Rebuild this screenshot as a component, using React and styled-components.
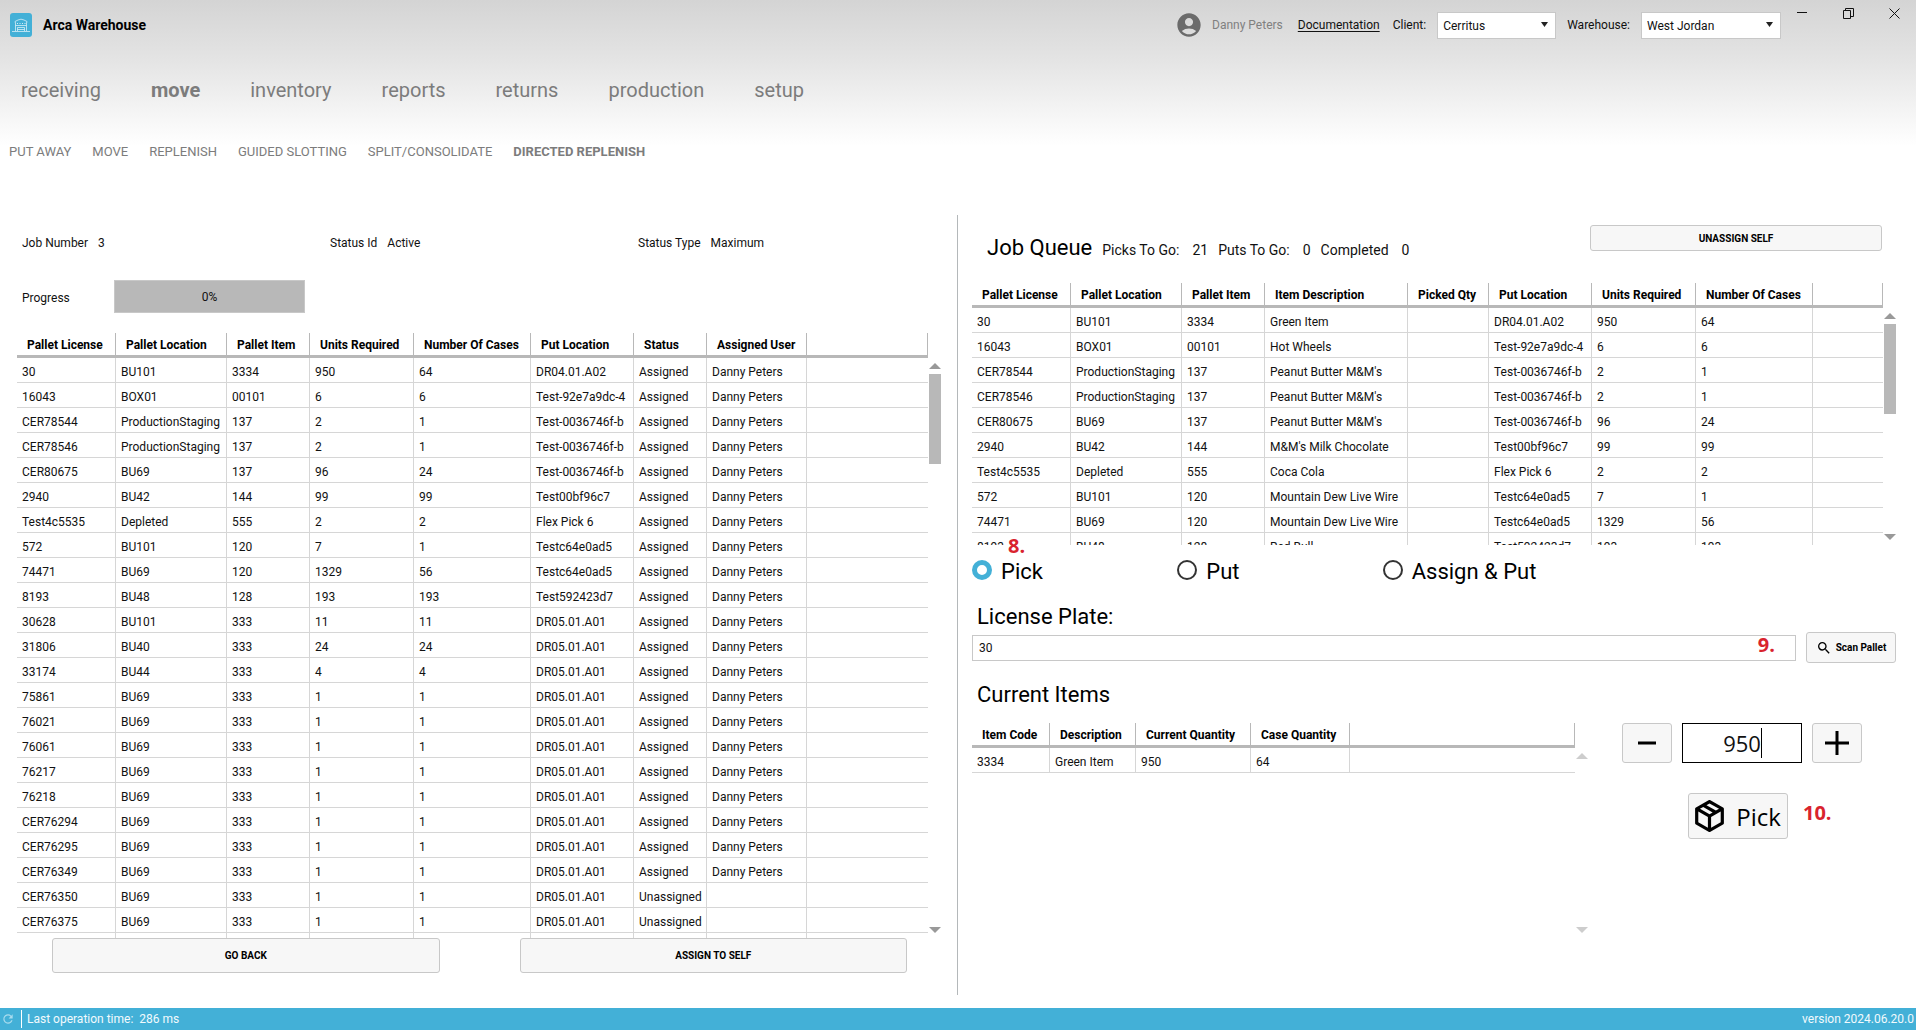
import { useState } from 'react';
import styled, { createGlobalStyle } from 'styled-components';
import { MdAccountCircle, MdSearch, MdRefresh } from 'react-icons/md';

const GlobalStyle = createGlobalStyle`
  * {
    box-sizing: border-box;
  }
  body {
    margin: 0;
    background: #fff;
    color: #111;
    font-family: Roboto, "Liberation Sans", sans-serif;
    font-size: 12px;
    line-height: 20px;
  }
  button, input, select {
    font-family: inherit;
    color: inherit;
  }
`;

const Page = styled.div`
  height: 100vh;
  display: flex;
  flex-direction: column;
  background: linear-gradient(#d4d4d4, #e4e4e4 60px, #fff 146px);
`;

/* ---------- header ---------- */

const TopBar = styled.header`
  display: flex;
  align-items: center;
  height: 50px;
  padding: 0 1px 0 10px;
`;

const Logo = styled.svg`
  width: 22px;
  height: 24px;
  margin-right: 11px;
`;

const AppTitle = styled.h1`
  margin: 0;
  font-size: 14px;
  font-weight: 700;
  color: #000;
`;

const UserArea = styled.div`
  display: flex;
  align-items: center;
  gap: 11px;
  margin-left: auto;
`;

const Avatar = styled(MdAccountCircle)`
  width: 28px;
  height: 28px;
  margin: 0 -2px;
  color: #6b6b6b;
`;

const UserName = styled.span`
  color: #808080;
`;

const DocLink = styled.a`
  margin: 0 2px 0 4px;
  color: #111;
  text-underline-offset: 2px;
`;

const SelectBox = styled.div`
  position: relative;
  width: ${(p) => p.$width};

  select {
    appearance: none;
    width: 100%;
    height: 27px;
    padding: 1px 20px 0 5px;
    border: 1px solid #c8c8c8;
    border-radius: 0;
    background: #fff;
    font-size: 12px;
  }
  svg {
    position: absolute;
    right: 8px;
    top: 10px;
    pointer-events: none;
  }
`;

const WindowButtons = styled.div`
  display: flex;
  align-self: flex-start;
  gap: 4px;

  button {
    display: flex;
    align-items: center;
    justify-content: center;
    width: 42px;
    height: 26px;
    padding: 0;
    border: 0;
    background: none;
  }
`;

const MainNav = styled.nav`
  display: flex;
  align-items: center;
  gap: 50px;
  height: 80px;
  padding-left: 21px;
`;

const SubNav = styled.nav`
  display: flex;
  align-items: center;
  gap: 21px;
  height: 44px;
  padding-left: 9px;
`;

const NavLink = styled.a`
  font-size: ${(p) => (p.$small ? '13px' : '20px')};
  font-weight: ${(p) => (p.$active ? 700 : 400)};
  color: #7c7c7c;
  text-decoration: none;
`;

/* ---------- panels ---------- */

const Main = styled.main`
  flex: 1;
  min-height: 0;
  display: grid;
  grid-template-columns: 1fr 1fr;
  padding: 41px 0 13px;
`;

const LeftPanel = styled.section`
  display: flex;
  flex-direction: column;
  min-width: 0;
  min-height: 0;
  padding: 18px 16px 22px 17px;
  border-right: 1px solid #b4b8ba;
`;

const RightPanel = styled.section`
  display: flex;
  flex-direction: column;
  min-width: 0;
  min-height: 0;
  padding: 0 20px 57px 14px;
`;

const InfoRow = styled.div`
  display: grid;
  grid-template-columns: repeat(3, 1fr);
`;

const InfoItem = styled.div`
  display: flex;
  gap: 10px;
  padding-left: 5px;
`;

const ProgressRow = styled.div`
  display: flex;
  align-items: center;
  margin: 27px 0 20px;
  padding-left: 5px;
`;

const ProgressLabel = styled.span`
  width: 92px;
  padding-top: 2px;
`;

const ProgressBar = styled.div`
  width: 191px;
  height: 33px;
  padding-top: 1px;
  border: 1px solid #c8c8c8;
  background: #b8b8b8;
  line-height: 31px;
  text-align: center;
`;

const FooterButtons = styled.div`
  display: grid;
  grid-template-columns: 1fr 1fr;
  gap: 80px;
  padding: 0 34px 0 35px;
`;

const Button = styled.button`
  height: ${(p) => p.$height || '35px'};
  padding: 0;
  border: 1px solid #c8c8c8;
  border-radius: 3px;
  background: #f7f7f7;
  color: #000;
  font-size: 10px;
  font-weight: 700;
`;

/* ---------- grid ---------- */

const TableArea = styled.div`
  display: flex;
  min-height: 0;
  overflow: hidden;
  ${(p) => (p.$height ? `flex: none; height: ${p.$height};` : 'flex: 1;')}
`;

const TableClip = styled.div`
  flex: 1;
  min-width: 0;
  overflow: hidden;
`;

const Table = styled.table`
  width: 100%;
  table-layout: fixed;
  border-spacing: 0;
`;

const Th = styled.th`
  width: ${(p) => p.$width || 'auto'};
  height: 25px;
  padding: 2px 0 0 10px;
  border-right: 1px solid #b8b8b8;
  border-bottom: 3px solid #b8b8b8;
  color: #000;
  font-weight: 700;
  line-height: 16px;
  text-align: left;
  white-space: nowrap;
`;

const Td = styled.td`
  height: 25px;
  padding: 4px 0 0 5px;
  border-right: 1px solid #d6d6d6;
  border-bottom: 1px solid #d6d6d6;
  line-height: 16px;
  white-space: nowrap;

  &:last-child {
    border-right: 0;
  }
`;

const ScrollTrack = styled.div`
  display: flex;
  flex-direction: column;
  align-items: center;
  width: 13px;
  padding: 30px 0 5px;
  color: ${(p) => (p.$disabled ? '#cdcdcd' : '#999')};
`;

const Thumb = styled.div`
  width: 12px;
  height: 90px;
  margin-top: 5px;
  background: #b8b8b8;
`;

const Spacer = styled.div`
  flex: 1;
`;

/* ---------- job queue ---------- */

const QueueHeader = styled.div`
  display: flex;
  align-items: flex-start;
  justify-content: space-between;
  height: 68px;
  padding: 10px 14px 0 15px;
`;

const QueueStats = styled.div`
  display: flex;
  align-items: baseline;
  gap: 10px;
  padding-top: 8px;
  font-size: 14px;
  line-height: 30px;
  white-space: nowrap;
`;

const Heading = styled.h2`
  margin: 0;
  font-size: 22px;
  font-weight: 400;
  color: #000;
`;

const Stat = styled.span`
  display: inline-flex;
  gap: 13px;
`;

const UnassignButton = styled(Button)`
  width: 292px;
`;

const RadioHolder = styled.div`
  position: relative;
`;

const RadioGroup = styled.div`
  display: grid;
  grid-template-columns: repeat(3, 1fr);
  align-items: center;
  width: 66.67%;
  height: 50px;
`;

const RadioLabel = styled.label`
  display: flex;
  align-items: center;
  gap: 9px;
  color: #000;
  font-size: 22px;
  white-space: nowrap;

  input {
    appearance: none;
    width: 20px;
    height: 20px;
    margin: 0;
    border: 2px solid #333;
    border-radius: 50%;
    background: #fff;
  }
  input:checked {
    border: 5px solid #43b0d7;
  }
  span {
    padding-top: 3px;
  }
`;

const FieldLabel = styled.label`
  margin-top: 7px;
  padding-left: 5px;
  color: #000;
  font-size: 22px;
  line-height: 30px;
`;

const PlateRow = styled.div`
  position: relative;
  display: flex;
  align-items: center;
  gap: 10px;
`;

const PlateInput = styled.input`
  flex: 1;
  height: 26px;
  padding: 1px 6px 0;
  border: 1px solid #c8c8c8;
  font-size: 12px;
`;

const ScanButton = styled(Button)`
  display: flex;
  align-items: center;
  justify-content: center;
  gap: 4px;
  width: 90px;
  white-space: nowrap;
`;

const ItemsHeading = styled(Heading)`
  margin: 16px 0 12px;
  padding-left: 5px;
  line-height: 32px;
`;

const ItemsRow = styled.div`
  flex: 1;
  min-height: 0;
  display: grid;
  grid-template-columns: 2fr 1fr;
`;

const Actions = styled.div`
  display: flex;
  flex-direction: column;
  align-items: center;
  gap: 30px;
`;

const Stepper = styled.div`
  display: flex;
  gap: 10px;
`;

const StepButton = styled(Button)`
  display: flex;
  align-items: center;
  justify-content: center;
  width: 50px;
`;

const QtyBox = styled.div`
  position: relative;
  width: 120px;

  input {
    width: 100%;
    height: 40px;
    border: 1px solid #000;
    font-family: "Open Sans", sans-serif;
    font-size: 22px;
    text-align: center;
  }
`;

const Caret = styled.span`
  position: absolute;
  top: 5px;
  left: 79px;
  width: 1px;
  height: 30px;
  background: #000;
`;

const PickHolder = styled.div`
  position: relative;
  margin-right: 8px;
`;

const PickButton = styled(Button)`
  display: flex;
  align-items: center;
  justify-content: center;
  gap: 12px;
  width: 100px;
  font-family: "Open Sans", sans-serif;
  font-size: 24px;
  font-weight: 500;
`;

/* red step numbers laid over the screen */
const Step = styled.span`
  position: absolute;
  left: ${(p) => p.$left || 'auto'};
  right: ${(p) => p.$right || 'auto'};
  top: ${(p) => p.$top};
  color: #d9232e;
  font-family: "Open Sans", sans-serif;
  font-size: 20px;
  font-weight: 700;
  line-height: 20px;
`;

const StatusBar = styled.footer`
  display: flex;
  align-items: center;
  height: 22px;
  padding: 0 2px 0 1px;
  background: #43b0d7;
  color: #f2fafd;
`;

const StatusText = styled.span`
  margin-left: 6px;
  padding-left: 5px;
  border-left: 1px solid #fff;
  line-height: 18px;
  white-space: pre;
`;

const Version = styled.span`
  margin-left: auto;
`;

/* ---------- data ---------- */

const mainNav = ['receiving', 'move', 'inventory', 'reports', 'returns', 'production', 'setup'];
const subNav = ['PUT AWAY', 'MOVE', 'REPLENISH', 'GUIDED SLOTTING', 'SPLIT/CONSOLIDATE', 'DIRECTED REPLENISH'];

const jobColumns = [
  ['Pallet License', '99px'],
  ['Pallet Location', '111px'],
  ['Pallet Item', '83px'],
  ['Units Required', '104px'],
  ['Number Of Cases', '117px'],
  ['Put Location', '103px'],
  ['Status', '73px'],
  ['Assigned User', '100px'],
  [''],
];

const DP = 'Danny Peters';
const jobRows = [
  ['30', 'BU101', '3334', '950', '64', 'DR04.01.A02', 'Assigned', DP],
  ['16043', 'BOX01', '00101', '6', '6', 'Test-92e7a9dc-4', 'Assigned', DP],
  ['CER78544', 'ProductionStaging', '137', '2', '1', 'Test-0036746f-b', 'Assigned', DP],
  ['CER78546', 'ProductionStaging', '137', '2', '1', 'Test-0036746f-b', 'Assigned', DP],
  ['CER80675', 'BU69', '137', '96', '24', 'Test-0036746f-b', 'Assigned', DP],
  ['2940', 'BU42', '144', '99', '99', 'Test00bf96c7', 'Assigned', DP],
  ['Test4c5535', 'Depleted', '555', '2', '2', 'Flex Pick 6', 'Assigned', DP],
  ['572', 'BU101', '120', '7', '1', 'Testc64e0ad5', 'Assigned', DP],
  ['74471', 'BU69', '120', '1329', '56', 'Testc64e0ad5', 'Assigned', DP],
  ['8193', 'BU48', '128', '193', '193', 'Test592423d7', 'Assigned', DP],
  ['30628', 'BU101', '333', '11', '11', 'DR05.01.A01', 'Assigned', DP],
  ['31806', 'BU40', '333', '24', '24', 'DR05.01.A01', 'Assigned', DP],
  ['33174', 'BU44', '333', '4', '4', 'DR05.01.A01', 'Assigned', DP],
  ['75861', 'BU69', '333', '1', '1', 'DR05.01.A01', 'Assigned', DP],
  ['76021', 'BU69', '333', '1', '1', 'DR05.01.A01', 'Assigned', DP],
  ['76061', 'BU69', '333', '1', '1', 'DR05.01.A01', 'Assigned', DP],
  ['76217', 'BU69', '333', '1', '1', 'DR05.01.A01', 'Assigned', DP],
  ['76218', 'BU69', '333', '1', '1', 'DR05.01.A01', 'Assigned', DP],
  ['CER76294', 'BU69', '333', '1', '1', 'DR05.01.A01', 'Assigned', DP],
  ['CER76295', 'BU69', '333', '1', '1', 'DR05.01.A01', 'Assigned', DP],
  ['CER76349', 'BU69', '333', '1', '1', 'DR05.01.A01', 'Assigned', DP],
  ['CER76350', 'BU69', '333', '1', '1', 'DR05.01.A01', 'Unassigned', ''],
  ['CER76375', 'BU69', '333', '1', '1', 'DR05.01.A01', 'Unassigned', ''],
  [],
];

const queueColumns = [
  ['Pallet License', '99px'],
  ['Pallet Location', '111px'],
  ['Pallet Item', '83px'],
  ['Item Description', '143px'],
  ['Picked Qty', '81px'],
  ['Put Location', '103px'],
  ['Units Required', '104px'],
  ['Number Of Cases', '117px'],
  [''],
];

const descriptions = [
  'Green Item',
  'Hot Wheels',
  "Peanut Butter M&M's",
  "Peanut Butter M&M's",
  "Peanut Butter M&M's",
  "M&M's Milk Chocolate",
  'Coca Cola',
  'Mountain Dew Live Wire',
  'Mountain Dew Live Wire',
  'Red Bull',
];

const queueRows = descriptions.map((text, i) => {
  const [license, location, item, units, cases, put] = jobRows[i];
  return [license, location, item, text, '', put, units, cases];
});

const itemColumns = [
  ['Item Code', '78px'],
  ['Description', '86px'],
  ['Current Quantity', '115px'],
  ['Case Quantity', '99px'],
  [''],
];

/* ---------- parts ---------- */

const DataGrid = ({ columns, rows, height, disabled }) => (
  <TableArea $height={height}>
    <TableClip>
      <Table>
        <thead>
          <tr>
            {columns.map(([name, width], i) => (
              <Th key={i} $width={width}>{name}</Th>
            ))}
          </tr>
        </thead>
        <tbody>
          {rows.map((row, i) => (
            <tr key={i}>
              {columns.map((col, j) => (
                <Td key={j}>{row[j]}</Td>
              ))}
            </tr>
          ))}
        </tbody>
      </Table>
    </TableClip>
    <ScrollTrack $disabled={disabled}>
      <svg width="12" height="6"><path d="M0 6L6 0l6 6z" fill="currentColor" /></svg>
      {!disabled && <Thumb />}
      <Spacer />
      <svg width="12" height="6"><path d="M0 0l6 6 6-6z" fill="currentColor" /></svg>
    </ScrollTrack>
  </TableArea>
);

const DropDown = ({ id, value, width }) => (
  <SelectBox $width={width}>
    <select id={id} defaultValue={value}>
      <option>{value}</option>
    </select>
    <svg width="7" height="5"><path d="M0 0h7L3.500 5z" fill="#222" /></svg>
  </SelectBox>
);

const BoxIcon = () => (
  <svg width="29" height="32" viewBox="3 2 18 20">
    <path d="M21 16.500c0 .38-.21.71-.53.88l-7.900 4.440c-.16.12-.36.18-.57.18s-.41-.06-.57-.18l-7.900-4.440A.99.99 0 0 1 3 16.500v-9c0-.38.21-.71.53-.88l7.900-4.440c.16-.12.36-.18.57-.18s.41.06.57.18l7.900 4.440c.32.17.53.5.53.88v9M12 4.150l-1.890 1.070L16 8.610l1.960-1.110L12 4.150M6.040 7.500L12 10.850l1.960-1.100-5.880-3.400L6.040 7.500M5 15.910l6 3.380v-6.710L5 9.210v6.700m14 0v-6.700l-6 3.370v6.710l6-3.380z" />
  </svg>
);

const Header = () => (
  <>
    <TopBar>
      <Logo viewBox="0 0 22 24" fill="none" stroke="#d5eef7">
        <rect width="22" height="24" rx="3" fill="#43b0d7" stroke="none" />
        <path d="M2 18.500h18M5.500 18V9.500h-.5V8.500L8 7l3-.8L14 7l3 1.500v1h-.5V18M5.500 12.500h11M7.500 18v-3.500h7V18M7.500 16.500h7" strokeWidth=".8" />
        <path d="M7 10.500h9" strokeDasharray="1 1.500" />
      </Logo>
      <AppTitle>Arca Warehouse</AppTitle>
      <UserArea>
        <Avatar />
        <UserName>Danny Peters</UserName>
        <DocLink href="#docs">Documentation</DocLink>
        <label htmlFor="client">Client:</label>
        <DropDown id="client" value="Cerritus" width="119px" />
        <label htmlFor="warehouse">Warehouse:</label>
        <DropDown id="warehouse" value="West Jordan" width="140px" />
      </UserArea>
      <WindowButtons>
        <button aria-label="Minimize">
          <svg width="10" height="10"><path d="M0 4.500h10" stroke="#111" /></svg>
        </button>
        <button aria-label="Restore">
          <svg width="11" height="11" fill="none" stroke="#111">
            <path d="M.5 2.500h7v8h-7zM2.500 2.500v-2h8v8h-3" />
          </svg>
        </button>
        <button aria-label="Close">
          <svg width="11" height="11"><path d="M.5.5l10 10M10.500.5l-10 10" stroke="#111" /></svg>
        </button>
      </WindowButtons>
    </TopBar>
    <MainNav>
      {mainNav.map((name) => (
        <NavLink key={name} href={`#${name}`} $active={name === 'move'}>{name}</NavLink>
      ))}
    </MainNav>
    <SubNav>
      {subNav.map((name) => (
        <NavLink key={name} href="#move" $small $active={name === 'DIRECTED REPLENISH'}>{name}</NavLink>
      ))}
    </SubNav>
  </>
);

const JobPanel = () => (
  <LeftPanel>
    <InfoRow>
      <InfoItem><span>Job Number</span><span>3</span></InfoItem>
      <InfoItem><span>Status Id</span><span>Active</span></InfoItem>
      <InfoItem><span>Status Type</span><span>Maximum</span></InfoItem>
    </InfoRow>
    <ProgressRow>
      <ProgressLabel id="progress-label">Progress</ProgressLabel>
      <ProgressBar role="progressbar" aria-labelledby="progress-label" aria-valuenow={0}>0%</ProgressBar>
    </ProgressRow>
    <DataGrid columns={jobColumns} rows={jobRows} />
    <FooterButtons>
      <Button>GO BACK</Button>
      <Button>ASSIGN TO SELF</Button>
    </FooterButtons>
  </LeftPanel>
);

const QueuePanel = () => {
  const [mode, setMode] = useState('Pick');
  const [plate, setPlate] = useState('30');
  const [qty, setQty] = useState(950);

  return (
    <RightPanel>
      <QueueHeader>
        <QueueStats>
          <Heading>Job Queue</Heading>
          <Stat><span>Picks To Go:</span><span>21</span></Stat>
          <Stat><span>Puts To Go:</span><span>0</span></Stat>
          <Stat><span>Completed</span><span>0</span></Stat>
        </QueueStats>
        <UnassignButton $height="26px">UNASSIGN SELF</UnassignButton>
      </QueueHeader>
      <DataGrid columns={queueColumns} rows={queueRows} height="262px" />
      <RadioHolder>
        <RadioGroup>
          {['Pick', 'Put', 'Assign & Put'].map((name) => (
            <RadioLabel key={name}>
              <input type="radio" name="mode" checked={mode === name} onChange={() => setMode(name)} />
              <span>{name}</span>
            </RadioLabel>
          ))}
        </RadioGroup>
        <Step $left="36px" $top="-9px">8.</Step>
      </RadioHolder>
      <FieldLabel htmlFor="plate">License Plate:</FieldLabel>
      <PlateRow>
        <PlateInput id="plate" value={plate} onChange={(e) => setPlate(e.target.value)} />
        <ScanButton $height="31px"><MdSearch size={16} />Scan Pallet</ScanButton>
        <Step $right="121px" $top="3px">9.</Step>
      </PlateRow>
      <ItemsHeading>Current Items</ItemsHeading>
      <ItemsRow>
        <DataGrid columns={itemColumns} rows={[['3334', 'Green Item', '950', '64']]} disabled />
        <Actions>
          <Stepper>
            <StepButton $height="40px" aria-label="Decrease" onClick={() => setQty(qty - 1)}>
              <svg width="24" height="24"><path d="M3 12h18" stroke="#000" strokeWidth="3" /></svg>
            </StepButton>
            <QtyBox>
              <input aria-label="Quantity" value={qty} onChange={(e) => setQty(Number(e.target.value))} />
              <Caret />
            </QtyBox>
            <StepButton $height="40px" aria-label="Increase" onClick={() => setQty(qty + 1)}>
              <svg width="24" height="24"><path d="M0 12h24M12 0v24" stroke="#000" strokeWidth="3" /></svg>
            </StepButton>
          </Stepper>
          <PickHolder>
            <PickButton $height="46px"><BoxIcon />Pick</PickButton>
            <Step $left="115px" $top="10px">10.</Step>
          </PickHolder>
        </Actions>
      </ItemsRow>
    </RightPanel>
  );
};

const App = () => (
  <>
    <GlobalStyle />
    <Page>
      <Header />
      <Main>
        <JobPanel />
        <QueuePanel />
      </Main>
      <StatusBar>
        <MdRefresh size={14} color="#a9dcee" />
        <StatusText>Last operation time:  286 ms</StatusText>
        <Version>version 2024.06.20.0</Version>
      </StatusBar>
    </Page>
  </>
);

export default App;
